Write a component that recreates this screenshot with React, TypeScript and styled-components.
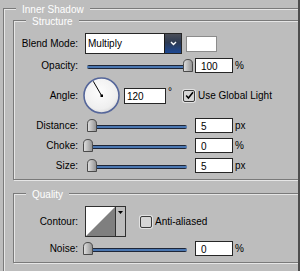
import React from "react";
import styled, { createGlobalStyle } from "styled-components";

const BG = "#bdbdbd";
const DARK = "#7a7a7a";
const LIGHT = "#e6e6e6";

const Global = createGlobalStyle`
  html, body { margin: 0; padding: 0; background: ${BG}; }
  body {
    font-family: "Liberation Sans", Arial, sans-serif;
    font-size: 10px;
    color: #000;
  }
`;

const Frame = styled.div`
  display: flex;
  width: 300px;
  height: 271px;
  overflow: hidden;
  background: ${BG};
`;

const Main = styled.div`
  flex: 0 0 298px;
  overflow: hidden;
  box-sizing: border-box;
  padding: 8px 0 0 3px;
`;

const Edge = styled.div`
  flex: 0 0 2px;
  background: #4e4e4e;
`;

const Group = styled.section<{ $outer?: boolean; $top?: number; $bottom?: number }>`
  display: flex;
  flex-direction: column;
  align-items: flex-start;
  width: 340px;
  flex-shrink: 0;
  box-sizing: border-box;
  border: 1px solid ${DARK};
  box-shadow: inset 1px 1px 0 ${LIGHT}, 1px 1px 0 ${LIGHT};
  margin: ${(p) => p.$top ?? 0}px 0 0 ${(p) => (p.$outer ? 0 : 9)}px;
  padding-bottom: ${(p) => p.$bottom ?? 0}px;
`;

const Title = styled.h2`
  margin: -5px 0 0 12px;
  padding: 0 6px;
  height: 12px;
  line-height: 12px;
  font-size: 10px;
  font-weight: normal;
  color: #fff;
  background: ${BG};
  white-space: nowrap;
`;

const Row = styled.div<{ $h: number; $top: number }>`
  display: flex;
  align-items: center;
  height: ${(p) => p.$h}px;
  margin-top: ${(p) => p.$top}px;
  white-space: nowrap;
`;

const Label = styled.span`
  flex: 0 0 64px;
  text-align: right;
  line-height: 12px;
`;

const Select = styled.div`
  display: flex;
  box-sizing: border-box;
  width: 97px;
  height: 21px;
  margin-left: 7px;
  border: 1px solid #262626;
  background: #fff;
`;

const SelectText = styled.span`
  flex: 1;
  padding-left: 2px;
  line-height: 19px;
  font-size: 10px;
`;

const SelectButton = styled.div`
  flex: 0 0 16px;
  display: flex;
  align-items: center;
  justify-content: center;
  border-left: 1px solid #1a1a1a;
  background: linear-gradient(#4a4e58 0%, #2d3a52 45%, #1d4894 100%);
`;

const Swatch = styled.div`
  box-sizing: border-box;
  width: 31px;
  height: 16px;
  margin-left: 4px;
  border: 1px solid #8c8c8c;
  background: #fff;
`;

const SliderBox = styled.div`
  position: relative;
  flex: 0 0 109px;
  height: 15px;
  margin-left: 5px;
`;

const Track = styled.div`
  width: 100px;
  height: 4px;
  margin: 7px 0 0 4px;
  border-radius: 2px;
  background: linear-gradient(#1e2638 0 1px, #4a76b0 1px 3px, #1e2638 3px 4px);
`;

const Thumb = styled.div`
  position: absolute;
  top: 1px;
  width: 10px;
  height: 13px;
  line-height: 0;
`;

const Field = styled.input<{ $w?: number; $h?: number; $pad?: number; $left?: number }>`
  box-sizing: border-box;
  width: ${(p) => p.$w ?? 38}px;
  height: ${(p) => p.$h ?? 15}px;
  margin: 0 0 0 ${(p) => p.$left ?? 3}px;
  padding: 1px 0 0 ${(p) => p.$pad ?? 5}px;
  border: 1px solid #262626;
  border-radius: 0;
  background: #fff;
  font-family: "Liberation Sans", Arial, sans-serif;
  font-size: 10px;
  color: #000;
  outline: none;
`;

const Unit = styled.span`
  margin-left: 2px;
  line-height: 12px;
`;

const Degree = styled.span`
  margin: 0 0 7px 2px;
  line-height: 10px;
`;

const Dial = styled.div`
  flex: 0 0 37px;
  height: 37px;
  margin-left: 5px;
  line-height: 0;
`;

const Check = styled.span<{ $left: number }>`
  display: flex;
  align-items: center;
  justify-content: center;
  box-sizing: border-box;
  width: 12px;
  height: 12px;
  margin-left: ${(p) => p.$left}px;
  border: 1px solid #3c3c3c;
  border-radius: 2px;
  background: #d6d6d6;
  box-shadow: 0 0 0 1px #e2e2e2;
`;

const CheckLabel = styled.span`
  margin-left: 3px;
  line-height: 12px;
`;

const ContourBox = styled.div`
  display: flex;
  box-sizing: border-box;
  width: 41px;
  height: 31px;
  margin-left: 7px;
  border: 1px solid #303030;
  background: ${BG};
`;

const ContourPreview = styled.div`
  flex: 0 0 29px;
  line-height: 0;
  border-right: 1px solid #303030;
`;

const ContourArrow = styled.div`
  flex: 1;
  display: flex;
  justify-content: center;
  padding-top: 4px;
  line-height: 0;
`;

function ThumbIcon() {
  return (
    <svg width="10" height="13" viewBox="0 0 10 13">
      <defs>
        <linearGradient id="thumbg" x1="0" y1="0" x2="1" y2="0">
          <stop offset="0" stopColor="#e2e2e2" />
          <stop offset="1" stopColor="#909090" />
        </linearGradient>
      </defs>
      <path
        d="M0.5 12.5 V4.8 Q0.5 0.5 5 0.5 Q9.5 0.5 9.5 4.8 V12.5 Z"
        fill="url(#thumbg)"
        stroke="#4a4a4a"
      />
    </svg>
  );
}

function Slider({ pos }: { pos: number }) {
  return (
    <SliderBox>
      <Track />
      <Thumb style={{ left: pos }}>
        <ThumbIcon />
      </Thumb>
    </SliderBox>
  );
}

function CheckMark() {
  return (
    <svg width="9" height="9" viewBox="0 0 9 9">
      <path d="M1.2 4.6 L3.4 7 L8 1.2" fill="none" stroke="#000" strokeWidth="1.5" />
    </svg>
  );
}

function SliderRow({ label, value, unit, pos, h = 15, top }: { label: string; value: string; unit: string; pos: number; h?: number; top: number }) {
  return (
    <Row $h={h} $top={top}>
      <Label>{label}</Label>
      <Slider pos={pos} />
      <Field readOnly value={value} />
      <Unit>{unit}</Unit>
    </Row>
  );
}

export default function App() {
  return (
    <Frame>
      <Global />
      <Main>
        <Group $outer $bottom={30}>
          <Title>Inner Shadow</Title>
          <Group $top={4} $bottom={6}>
            <Title>Structure</Title>
            <Row $h={21} $top={5}>
              <Label>Blend Mode:</Label>
              <Select>
                <SelectText>Multiply</SelectText>
                <SelectButton>
                  <svg width="7" height="5" viewBox="0 0 7 5">
                    <path d="M1 1 L3.5 3.5 L6 1" fill="none" stroke="#fff" strokeWidth="1.4" />
                  </svg>
                </SelectButton>
              </Select>
              <Swatch />
            </Row>
            <SliderRow label="Opacity:" value="100" unit="%" pos={100} top={4} />
            <Row $h={37} $top={4}>
              <Label>Angle:</Label>
              <Dial>
                <svg width="37" height="37" viewBox="0 0 37 37">
                  <defs>
                    <radialGradient id="dialg" cx="0.45" cy="0.4" r="0.65">
                      <stop offset="0" stopColor="#fdfdfd" />
                      <stop offset="0.75" stopColor="#efefef" />
                      <stop offset="1" stopColor="#d4d4d4" />
                    </radialGradient>
                  </defs>
                  <circle cx="18.5" cy="18.5" r="17.5" fill="url(#dialg)" stroke="#55669a" strokeWidth="1.6" />
                  <line x1="18.5" y1="18.5" x2="10.3" y2="4.3" stroke="#000" strokeWidth="1" />
                  <rect x="17.5" y="17.5" width="2.5" height="2.5" fill="#000" />
                </svg>
              </Dial>
              <Field readOnly value="120" $w={42} $h={16} $pad={2} $left={4} />
              <Degree>°</Degree>
              <Check $left={11}>
                <CheckMark />
              </Check>
              <CheckLabel>Use Global Light</CheckLabel>
            </Row>
            <SliderRow label="Distance:" value="5" unit="px" pos={4} top={4} />
            <SliderRow label="Choke:" value="0" unit="%" pos={0} top={5} />
            <SliderRow label="Size:" value="5" unit="px" pos={4} top={5} />
          </Group>
          <Group $top={13} $bottom={6}>
            <Title>Quality</Title>
            <Row $h={31} $top={5}>
              <Label>Contour:</Label>
              <ContourBox>
                <ContourPreview>
                  <svg width="29" height="29" viewBox="0 0 29 29">
                    <rect x="0" y="0" width="29" height="29" fill="#fff" />
                    <polygon points="0,29 29,0 29,29" fill="#7f7f7f" />
                  </svg>
                </ContourPreview>
                <ContourArrow>
                  <svg width="5" height="3" viewBox="0 0 5 3">
                    <polygon points="0,0 5,0 2.5,3" fill="#000" />
                  </svg>
                </ContourArrow>
              </ContourBox>
              <Check $left={14} />
              <CheckLabel>Anti-aliased</CheckLabel>
            </Row>
            <SliderRow label="Noise:" value="0" unit="%" pos={0} top={4} />
          </Group>
        </Group>
      </Main>
      <Edge />
    </Frame>
  );
}
